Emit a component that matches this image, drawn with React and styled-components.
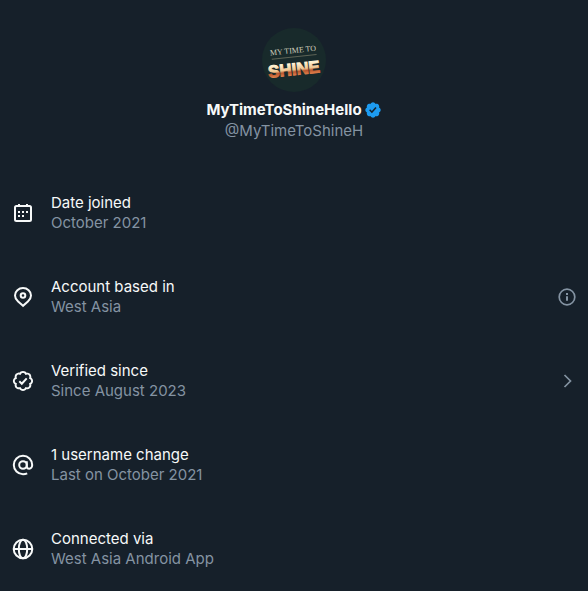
import React from 'react';
import styled, { createGlobalStyle } from 'styled-components';

const SEAL =
  'M20.396 11c-.018-.646-.215-1.275-.57-1.816-.354-.54-.852-.972-1.438-1.246.223-.607.27-1.264.14-1.897-.131-.634-.437-1.218-.882-1.687-.47-.445-1.053-.75-1.687-.882-.633-.13-1.29-.083-1.897.14-.273-.587-.704-1.086-1.245-1.44S11.647 1.62 11 1.604c-.646.017-1.273.213-1.813.568s-.969.854-1.24 1.44c-.608-.223-1.267-.272-1.902-.14-.635.13-1.22.436-1.69.882-.445.47-.749 1.055-.878 1.688-.13.633-.08 1.29.144 1.896-.587.274-1.087.705-1.443 1.245-.356.54-.555 1.17-.574 1.817.02.647.218 1.276.574 1.817.356.54.856.972 1.443 1.245-.224.606-.274 1.263-.144 1.896.13.634.433 1.218.877 1.688.47.443 1.054.747 1.687.878.633.132 1.29.084 1.897-.136.274.586.705 1.084 1.246 1.439.54.354 1.17.551 1.816.569.647-.016 1.276-.213 1.817-.567s.972-.854 1.245-1.44c.604.239 1.266.296 1.903.164.636-.132 1.22-.447 1.68-.907.46-.46.776-1.044.908-1.681s.075-1.299-.165-1.903c.586-.274 1.084-.705 1.439-1.246.354-.54.551-1.17.569-1.816z';

const CalendarIcon = () => (
  <Icon viewBox="0 0 24 24" aria-hidden="true">
    <rect x="4" y="5" width="16" height="15" rx="1.5" />
    <path d="M8 3v3M16 3v3" />
    <path d="M7 11h2M11 11h2M15 11h2M7 15h2M11 15h2" />
  </Icon>
);

const PinIcon = () => (
  <Icon viewBox="0 0 24 24" aria-hidden="true">
    <path d="M12 20.800l-4.900-4.400C5.100 14.600 4 12.500 4 10.400 4 6.300 7.600 3 12 3s8 3.300 8 7.400c0 2.100-1.100 4.200-3.100 6z" />
    <circle cx="12" cy="10.500" r="2.300" />
  </Icon>
);

const SealIcon = () => (
  <Icon viewBox="0 0 24 24" aria-hidden="true">
    <path d={SEAL} transform="translate(1.300 1.300) scale(.97)" />
    <path d="M8.300 12.300l2.500 2.400 4.900-5.300" />
  </Icon>
);

const AtIcon = () => (
  <Icon viewBox="0 0 24 24" aria-hidden="true">
    <circle cx="12" cy="12" r="3.800" />
    <path d="M15.800 8.200v5c0 1.500 1 2.500 2.500 2.500s2.900-1.500 2.900-3.700A9.200 9.200 0 1 0 12 21.200c1.600 0 3-.3 4.200-.9" />
  </Icon>
);

const GlobeIcon = () => (
  <Icon viewBox="0 0 24 24" aria-hidden="true">
    <circle cx="12" cy="12" r="9.300" />
    <ellipse cx="12" cy="12" rx="4.200" ry="9.300" />
    <path d="M2.700 12h18.600" />
  </Icon>
);

const InfoIcon = () => (
  <SmallIcon viewBox="0 0 20 20" aria-hidden="true">
    <circle cx="10" cy="10" r="7.800" strokeWidth="1.700" />
    <path d="M10 9.300v4.400M10 6v2" strokeWidth="2" />
  </SmallIcon>
);

const ChevronIcon = () => (
  <SmallIcon viewBox="0 0 20 20" aria-hidden="true">
    <path d="M7.500 4L13.500 10l-6 6" strokeWidth="1.700" />
  </SmallIcon>
);

const VerifiedBadge = () => (
  <Badge viewBox="0 0 22 22" role="img" aria-label="Verified account">
    <path
      fillRule="evenodd"
      d={`${SEAL}M9.662 14.850l-3.429-3.428 1.293-1.302 2.072 2.072 4.400-4.794 1.347 1.246z`}
    />
  </Badge>
);

const AvatarArt = () => (
  <Avatar viewBox="0 0 64 64" role="img" aria-label="My Time To Shine">
    <defs>
      <linearGradient id="gold" x1="0" y1="0" x2="0" y2="1">
        <stop offset="0.200" stopColor="#fff3d2" />
        <stop offset="0.500" stopColor="#efc690" />
        <stop offset="0.620" stopColor="#b9572f" />
        <stop offset="0.850" stopColor="#e88850" />
      </linearGradient>
    </defs>
    <circle cx="32" cy="32" r="32" fill="#182a2b" />
    <g transform="rotate(-6 32 32)">
      <Motto x="32" y="25">
        MY TIME TO
      </Motto>
      <path d="M10 29h45" stroke="#5d6355" />
      <Wordmark x="31" y="47">
        SHINE
      </Wordmark>
    </g>
  </Avatar>
);

const details = [
  { icon: CalendarIcon, title: 'Date joined', value: 'October 2021' },
  {
    icon: PinIcon,
    title: 'Account based in',
    value: 'West Asia',
    action: InfoIcon,
    actionLabel: 'About account location'
  },
  {
    icon: SealIcon,
    title: 'Verified since',
    value: 'Since August 2023',
    action: ChevronIcon,
    actionLabel: 'Verification details'
  },
  { icon: AtIcon, title: '1 username change', value: 'Last on October 2021' },
  { icon: GlobeIcon, title: 'Connected via', value: 'West Asia Android App' }
];

const App = () => {
  return (
    <Page>
      <GlobalStyle />
      <Profile>
        <AvatarArt />
        <Names>
          <NameRow>
            <Name>MyTimeToShineHello</Name>
            <VerifiedBadge />
          </NameRow>
          <Muted>@MyTimeToShineH</Muted>
        </Names>
      </Profile>

      <DetailList>
        {details.map(({ icon: RowIcon, title, value, action: Action, actionLabel }) => (
          <DetailRow key={title}>
            <RowIcon />
            <DetailText>
              <Title>{title}</Title>
              <Muted>{value}</Muted>
            </DetailText>
            {Action && (
              <ActionButton type="button" aria-label={actionLabel}>
                <Action />
              </ActionButton>
            )}
          </DetailRow>
        ))}
      </DetailList>
    </Page>
  );
};

const GlobalStyle = createGlobalStyle`
  * {
    box-sizing: border-box;
  }

  body {
    margin: 0;
    background-color: #16202a;
    color: #f7f9f9;
    font-family: Inter, "Liberation Sans", sans-serif;
    font-size: 15px;
    line-height: 20px;
  }
`;

const Page = styled.main`
  display: flex;
  flex-direction: column;
  gap: 52px;
  padding: 28px 11px 18px;
`;

const Profile = styled.header`
  display: flex;
  flex-direction: column;
  align-items: center;
  gap: 8px;
`;

const Avatar = styled.svg`
  width: 64px;
  height: 64px;
`;

const Motto = styled.text`
  font-family: "Liberation Serif", serif;
  font-size: 8px;
  fill: #d2d0be;
  text-anchor: middle;
`;

const Wordmark = styled.text`
  font-family: "Liberation Sans", sans-serif;
  font-size: 17px;
  font-weight: 700;
  fill: url(#gold);
  stroke: url(#gold);
  text-anchor: middle;
`;

const Names = styled.div`
  display: flex;
  flex-direction: column;
  align-items: center;
  gap: 1px;
`;

const NameRow = styled.div`
  display: flex;
  align-items: center;
  gap: 2px;
`;

const Name = styled.h1`
  margin: 0;
  font-size: 15px;
  font-weight: 700;
`;

const Badge = styled.svg`
  width: 18px;
  height: 18px;
  fill: #1d9bf0;
`;

const DetailList = styled.ul`
  display: flex;
  flex-direction: column;
  gap: 44px;
  margin: 0;
  padding: 0;
  list-style: none;
`;

const DetailRow = styled.li`
  display: flex;
  align-items: center;
  gap: 16px;
`;

const DetailText = styled.div`
  flex: 1 1 auto;
`;

const Title = styled.p`
  margin: 0;
`;

const Muted = styled.p`
  margin: 0;
  color: #8493a2;
`;

const Icon = styled.svg`
  flex: 0 0 auto;
  width: 24px;
  height: 24px;
  fill: none;
  stroke: currentColor;
  stroke-width: 2;
`;

const SmallIcon = styled.svg`
  display: block;
  width: 20px;
  height: 20px;
  fill: none;
  stroke: currentColor;
`;

const ActionButton = styled.button`
  padding: 0;
  border: 0;
  background: none;
  color: #8493a2;
  cursor: pointer;
`;

export default App;
